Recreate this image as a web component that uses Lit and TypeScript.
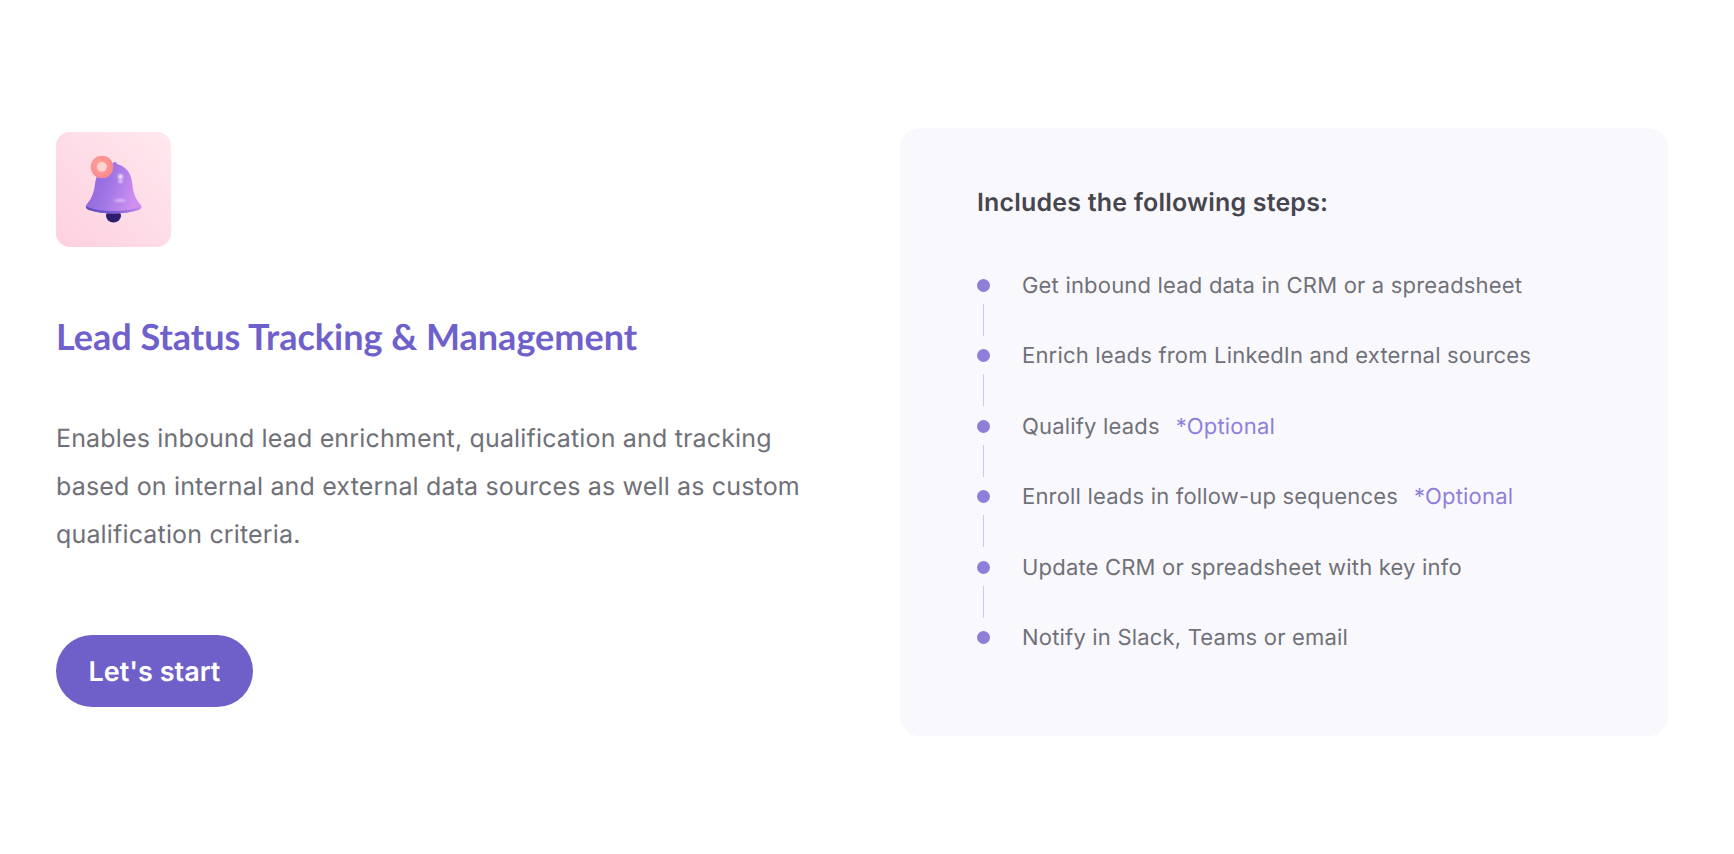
import { LitElement, html, css, svg } from "lit";
import { customElement } from "lit/decorators.js";

const steps: { text: string; optional?: boolean }[] = [
  { text: "Get inbound lead data in CRM or a spreadsheet" },
  { text: "Enrich leads from LinkedIn and external sources" },
  { text: "Qualify leads", optional: true },
  { text: "Enroll leads in follow-up sequences", optional: true },
  { text: "Update CRM or spreadsheet with key info" },
  { text: "Notify in Slack, Teams or email" },
];

const bell = svg`
  <defs>
    <linearGradient id="tile" x1="1" y1="0" x2="0" y2="1">
      <stop offset="0" stop-color="#ffe8ee"/><stop offset="1" stop-color="#fdd0e0"/>
    </linearGradient>
    <linearGradient id="body" x1="0" y1="0" x2="1" y2="0.3">
      <stop offset="0" stop-color="#8a62d8"/><stop offset="0.55" stop-color="#a277e6"/><stop offset="1" stop-color="#d08ff0"/>
    </linearGradient>
    <linearGradient id="rim" x1="0" y1="0" x2="1" y2="0">
      <stop offset="0" stop-color="#5a49b6"/><stop offset="0.55" stop-color="#7f62d6"/><stop offset="1" stop-color="#c48ae8"/>
    </linearGradient>
    <radialGradient id="ring" cx="0.4" cy="0.4" r="0.7">
      <stop offset="0" stop-color="#ffa59c"/><stop offset="1" stop-color="#fb8c8e"/>
    </radialGradient>
    <filter id="soft" x="-30%" y="-80%" width="160%" height="260%"><feGaussianBlur stdDeviation="0.8"/></filter>
  </defs>
  <rect width="115" height="115" fill="url(#tile)"/>
  <ellipse cx="57.500" cy="84" rx="7.500" ry="6.500" fill="#2c1e6c"/>
  <path d="M56 33C57 29.500 60 29 61 32 69 34 75 40 76 50 77 60 79 66 84 72 87 75 85 77 82 78 75 80.500 66 81.500 57.500 81.500 49 81.500 40 80.500 33 78 30 77 28.500 75 31 72 36 66 38 60 39 52 40 42 46 35 56 33z" fill="url(#body)"/>
  <path d="M30 74.500C37 77.500 47 79 57.500 79 68 79 78 77.500 85 74.500 85.500 76.200 84.500 77.300 82 78 75 80.500 66 81.500 57.500 81.500 49 81.500 40 80.500 33 78 31 77.300 30 76 30 74.500z" fill="url(#rim)"/>
  <ellipse cx="64" cy="68.500" rx="6.500" ry="1.200" fill="#dcc6f8" filter="url(#soft)"/>
  <circle cx="64.500" cy="44.700" r="2.400" fill="#f4ebff" filter="url(#soft)"/>
  <ellipse cx="64.500" cy="49.300" rx="1.900" ry="1.600" fill="#e9dbfc" filter="url(#soft)"/>
  <circle cx="46" cy="35" r="8" fill="none" stroke="url(#ring)" stroke-width="6.500"/>
  <circle cx="46" cy="35" r="4.800" fill="#ffd3cf"/>
`;

@customElement("app-root")
export class AppRoot extends LitElement {
  static styles = css`
    :host {
      display: block;
      width: 1734px;
      height: 854px;
      background: #fff;
      font-family: Inter, "Liberation Sans", sans-serif;
      text-rendering: geometricPrecision;
    }
    .page {
      display: grid;
      grid-template-columns: 844px 768px;
      height: 854px;
      box-sizing: border-box;
      padding: 128px 0 0 56px;
    }
    .left {
      display: flex;
      flex-direction: column;
      align-items: flex-start;
      padding-top: 4px;
    }
    .tile {
      display: block;
      width: 115px;
      height: 115px;
      border-radius: 14px;
    }
    h1 {
      margin: 66px 0 0;
      font: 700 36px/46px Lato, "Noto Sans", sans-serif;
      color: #6f60cb;
    }
    p {
      margin: 56px 0 0;
      width: 760px;
      font-size: 25px;
      line-height: 48px;
      letter-spacing: 0.16px;
      color: #707178;
    }
    button {
      margin-top: 76px;
      width: 197px;
      height: 72px;
      border: 0;
      border-radius: 36px;
      background: #6f60c9;
      color: #fff;
      font: 600 27px Inter, sans-serif;
      text-rendering: geometricPrecision;
    }
    .card {
      height: 608px;
      box-sizing: border-box;
      padding: 58px 0 0 77px;
      background: #f9f8fd;
      border-radius: 20px;
    }
    h2 {
      margin: 0;
      font-size: 25px;
      line-height: 34px;
      font-weight: 600;
      letter-spacing: 0.19px;
      color: #47464e;
    }
    ul {
      list-style: none;
      margin: 51px 0 0;
      padding: 0;
    }
    li {
      position: relative;
      display: flex;
      align-items: center;
      height: 30px;
      margin-bottom: 40.400px;
      padding-left: 45px;
      font-size: 22px;
      letter-spacing: 0.19px;
      color: #707178;
    }
    li::before {
      content: "";
      position: absolute;
      left: 0;
      top: 8px;
      width: 13px;
      height: 13px;
      border-radius: 50%;
      background: #8f7fda;
    }
    li:not(:last-child)::after {
      content: "";
      position: absolute;
      left: 6px;
      top: 33px;
      width: 1px;
      height: 32px;
      background: #cfc9e8;
    }
    .opt {
      margin-left: 16px;
      color: #8f7fda;
    }
  `;

  render() {
    return html`
      <div class="page">
        <div class="left">
          <svg class="tile" viewBox="0 0 115 115" aria-hidden="true">${bell}</svg>
          <h1>Lead Status Tracking &amp; Management</h1>
          <p>Enables inbound lead enrichment, qualification and tracking based on internal and external data sources as well as custom qualification criteria.</p>
          <button>Let's start</button>
        </div>
        <div class="card">
          <h2>Includes the following steps:</h2>
          <ul>
            ${steps.map(
              (s) => html`<li><span>${s.text}</span>${s.optional ? html`<span class="opt">*Optional</span>` : ""}</li>`
            )}
          </ul>
        </div>
      </div>
    `;
  }
}
